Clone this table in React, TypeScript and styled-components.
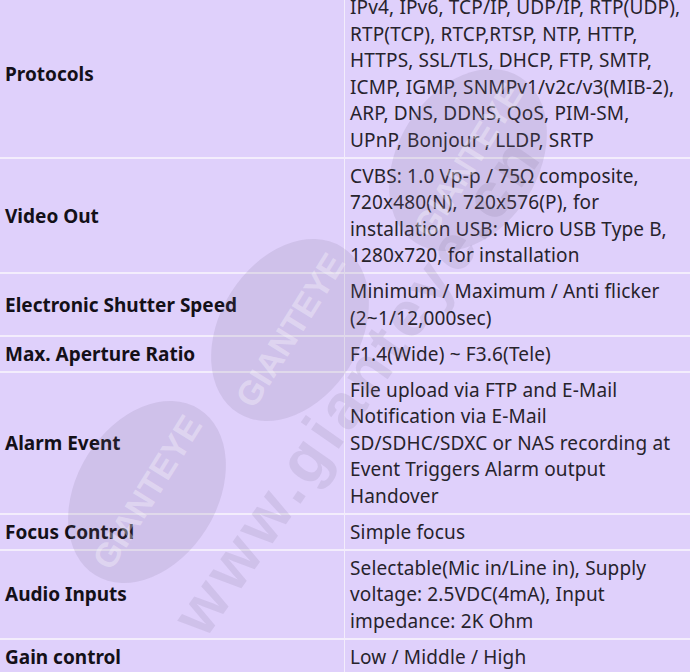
import styled, { createGlobalStyle } from 'styled-components';

const specs = [
  {
    label: 'Protocols',
    lines: [
      'IPv4, IPv6, TCP/IP, UDP/IP, RTP(UDP),',
      'RTP(TCP), RTCP,RTSP, NTP, HTTP,',
      'HTTPS, SSL/TLS, DHCP, FTP, SMTP,',
      'ICMP, IGMP, SNMPv1/v2c/v3(MIB-2),',
      'ARP, DNS, DDNS, QoS, PIM-SM,',
      'UPnP, Bonjour , LLDP, SRTP',
    ],
  },
  {
    label: 'Video Out',
    lines: [
      'CVBS: 1.0 Vp-p / 75Ω composite,',
      '720x480(N), 720x576(P), for',
      'installation USB: Micro USB Type B,',
      '1280x720, for installation',
    ],
  },
  {
    label: 'Electronic Shutter Speed',
    lines: ['Minimum / Maximum / Anti flicker', '(2~1/12,000sec)'],
  },
  { label: 'Max. Aperture Ratio', lines: ['F1.4(Wide) ~ F3.6(Tele)'] },
  {
    label: 'Alarm Event',
    lines: [
      'File upload via FTP and E-Mail',
      'Notification via E-Mail',
      'SD/SDHC/SDXC or NAS recording at',
      'Event Triggers Alarm output',
      'Handover',
    ],
  },
  { label: 'Focus Control', lines: ['Simple focus'] },
  {
    label: 'Audio Inputs',
    lines: [
      'Selectable(Mic in/Line in), Supply',
      'voltage: 2.5VDC(4mA), Input',
      'impedance: 2K Ohm',
    ],
  },
  { label: 'Gain control', lines: ['Low / Middle / High'] },
];

export default function App() {
  return (
    <>
      <GlobalStyle />
      <Page>
        <Table>
          {specs.map((spec) => (
            <Row key={spec.label}>
              <Label>{spec.label}</Label>
              <Value>
                {spec.lines.map((line) => (
                  <Line key={line}>{line}</Line>
                ))}
              </Value>
            </Row>
          ))}
        </Table>
        <Watermark viewBox="0 0 690 672" aria-hidden="true">
          <g transform="rotate(-58 468 160)">
            <ellipse cx="468" cy="160" rx="98" ry="70" fill="rgba(120,110,140,0.15)" />
            <text x="468" y="172" textAnchor="middle" fontSize="34" fontWeight="700" fill="rgba(255,255,255,0.32)" fontFamily="Liberation Sans, sans-serif">GIANTEYE</text>
          </g>
          <g transform="rotate(-58 290 330)">
            <ellipse cx="290" cy="330" rx="98" ry="70" fill="rgba(120,110,140,0.15)" />
            <text x="290" y="342" textAnchor="middle" fontSize="34" fontWeight="700" fill="rgba(255,255,255,0.32)" fontFamily="Liberation Sans, sans-serif">GIANTEYE</text>
          </g>
          <g transform="rotate(-58 147 492)">
            <ellipse cx="147" cy="492" rx="98" ry="70" fill="rgba(120,110,140,0.15)" />
            <text x="147" y="504" textAnchor="middle" fontSize="34" fontWeight="700" fill="rgba(255,255,255,0.32)" fontFamily="Liberation Sans, sans-serif">GIANTEYE</text>
          </g>
          <text
            x="0"
            y="0"
            transform="translate(205 640) rotate(-55)"
            fontSize="64"
            fontWeight="700"
            letterSpacing="5"
            fill="rgba(120,110,140,0.15)"
            fontFamily="Liberation Sans, sans-serif"
          >
            www.gianteye.cn
          </text>
        </Watermark>
      </Page>
    </>
  );
}

const GlobalStyle = createGlobalStyle`
  html, body {
    margin: 0;
    padding: 0;
    background: #dfd0fb;
  }
`;

const Page = styled.div`
  position: relative;
  width: 690px;
  height: 672px;
  overflow: hidden;
  background: #dfd0fb;
`;

const Table = styled.div`
  display: flex;
  flex-direction: column;
  margin-top: -10px;
`;

const Row = styled.div`
  display: grid;
  grid-template-columns: 345px 1fr;
  border-bottom: 2px solid #f3edfc;
`;

const Label = styled.div`
  display: flex;
  align-items: center;
  padding: 4px 5px 3.5px;
  border-right: 1px solid #f3edfc;
  font-family: 'Noto Sans', sans-serif;
  font-size: 19px;
  font-weight: 700;
  color: #141018;
`;

const Value = styled.div`
  padding: 4px 5px 3.5px;
  font-family: 'Noto Sans', sans-serif;
  font-size: 19px;
  line-height: 26.5px;
  letter-spacing: 0.15px;
  color: #27232c;
`;

const Line = styled.div`
  white-space: nowrap;
`;

const Watermark = styled.svg`
  position: absolute;
  inset: 0;
  width: 690px;
  height: 672px;
  pointer-events: none;
`;
